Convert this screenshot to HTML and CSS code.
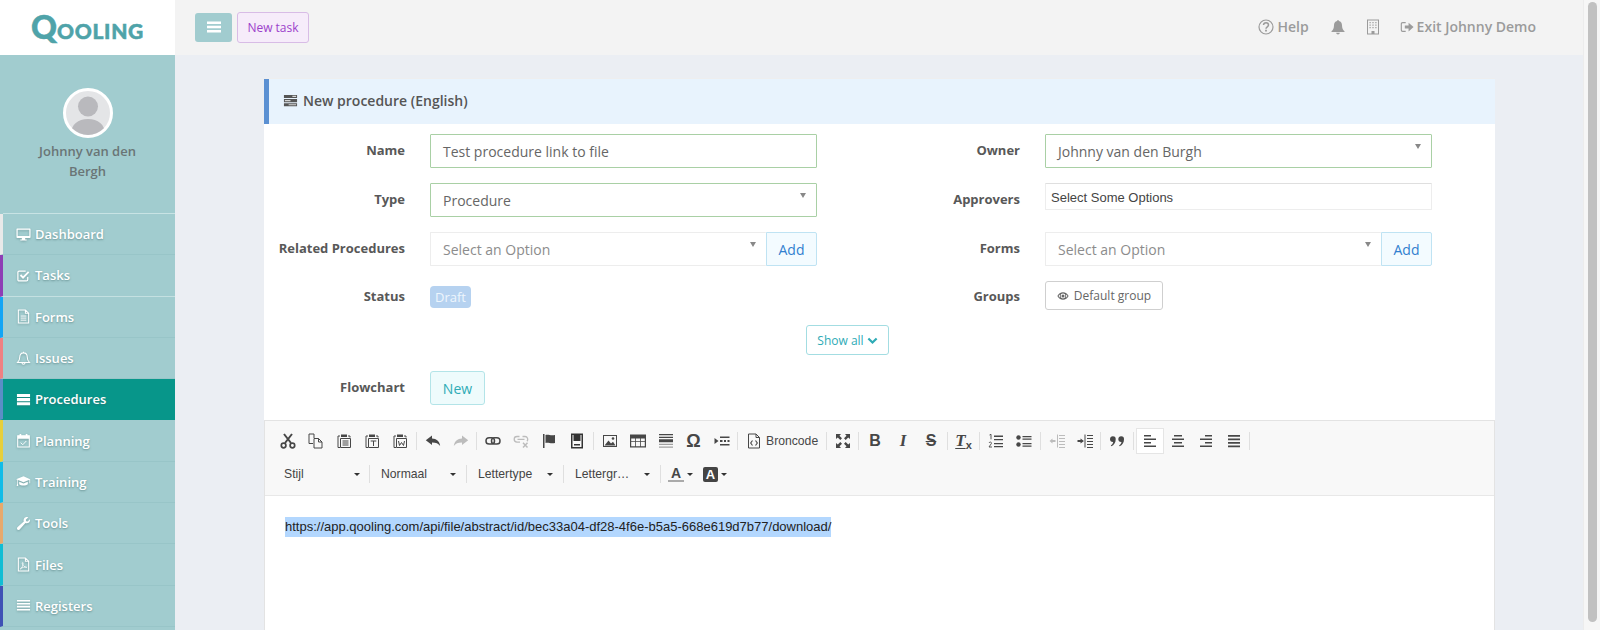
FILE: index.html
```html
<!DOCTYPE html>
<html lang="en">
<head>
<meta charset="utf-8">
<title>Qooling - New procedure</title>
<link rel="stylesheet" href="styles.css">
</head>
<body>
<svg class="sprite" xmlns="http://www.w3.org/2000/svg">
  <symbol id="i-bars" viewBox="0 0 16 16"><path d="M1 2.500h14v2.400H1zM1 6.800h14v2.400H1zM1 11.100h14v2.400H1z"/></symbol>
  <symbol id="i-proc" viewBox="0 0 16 16"><path d="M1 2h14v3.400H1zM1 6.400h14v3.400H1zM1 10.800h14v3.400H1z"/><path fill="#fff" opacity=".75" d="M10 3h4v1.200h-4zM2 7.500h6v1.200H2zM6 11.900h8v1.200H6z"/></symbol>
  <symbol id="i-desktop" viewBox="0 0 16 16"><path fill-rule="evenodd" d="M1.300 1.500h13.400c.5 0 .8.300.8.800v8.600c0 .5-.3.800-.8.800H9.800v1.500h1.600v1.300H4.600v-1.300h1.600v-1.500H1.300c-.5 0-.8-.3-.8-.8V2.300c0-.5.300-.8.800-.8zM1.800 2.800v6.900h12.400V2.800z"/></symbol>
  <symbol id="i-check" viewBox="0 0 16 16"><path fill="none" stroke="currentColor" stroke-width="1.300" d="M12.500 9.500v3c0 .8-.5 1.300-1.300 1.300H3.300c-.8 0-1.300-.5-1.300-1.300V4.600c0-.8.500-1.300 1.300-1.300h7"/><path fill="none" stroke="currentColor" stroke-width="2" d="M4.800 7.500l2.700 2.700 6-6"/></symbol>
  <symbol id="i-file" viewBox="0 0 16 16"><path fill="none" stroke="currentColor" stroke-width="1.100" d="M2.500 1h7.500l3.500 3.500V15h-11zM10 1v3.500h3.500"/><path fill="none" stroke="currentColor" d="M5 7.500h6M5 9.700h6M5 11.900h6"/></symbol>
  <symbol id="i-bell-o" viewBox="0 0 16 16"><path fill="none" stroke="currentColor" stroke-width="1.100" d="M8 2c2.800 0 4 2 4 4.500 0 3 1 4.500 2.300 5.700H1.700C3 11 4 9.500 4 6.500 4 4 5.200 2 8 2zM6.400 12.500c0 2.100 3.200 2.100 3.200 0M8 .8V2"/></symbol>
  <symbol id="i-cal" viewBox="0 0 16 16"><path fill="none" stroke="currentColor" stroke-width="1.100" d="M1.800 3h12.400v12H1.800z"/><path d="M1.800 3h12.400v3H1.800zM3.800 1h1.800v3H3.800zM10.400 1h1.800v3h-1.800z"/><path fill="none" stroke="currentColor" d="M5 10.300l2.200 2.200 3.800-4"/></symbol>
  <symbol id="i-grad" viewBox="0 0 16 16"><path d="M8 2.500L.1 5.600 8 8.700l6.300-2.500v3.600h.8V5.600zM3.400 8.300v2.500c1.400 2 7.800 2 9.200 0V8.300L8 10.100z"/><path d="M1.200 6.200h.7v4.300l.5 2.200H.7l.5-2.200z"/></symbol>
  <symbol id="i-wrench" viewBox="0 0 16 16"><path d="M15 4.200c0 2.500-2.500 4.200-4.900 3.300l-6.200 6.800c-.9.900-2.300.6-2.700-.2-.4-.7-.3-1.500.3-2.100l6.800-6.200C7.400 3.300 9.400.6 12 1c.4 0 .8.200 1.100.3L10.500 3.900l.4 1.600 1.600.4 2.300-2.500c.1.300.2.500.2.800z"/></symbol>
  <symbol id="i-pdf" viewBox="0 0 16 16"><path fill="none" stroke="currentColor" stroke-width="1.100" d="M2.500 1h7.500l3.500 3.500V15h-11zM10 1v3.500h3.500"/><path fill="none" stroke="currentColor" stroke-width=".8" d="M4.500 12.800c2-1 3.500-4.500 3-6.500-.3-1-1.200 0-.6 1.500.7 1.600 2.200 3 4.600 3.200-2-.6-4.700-.1-7 1.800z"/></symbol>
  <symbol id="i-lines" viewBox="0 0 16 16"><path d="M1 2h14v1.700H1zM1 5.200h14v1.700H1zM1 8.400h14v1.700H1zM1 11.600h14v1.700H1z"/></symbol>
  <symbol id="i-help" viewBox="0 0 16 16"><circle cx="8" cy="8" r="7" fill="none" stroke="currentColor" stroke-width="1.200"/><path fill="none" stroke="currentColor" stroke-width="1.500" d="M5.500 6c.2-3 5-3 5 0 0 1.800-2.500 1.800-2.500 3.800"/><path d="M7.100 10.800h1.800v1.800H7.100z"/></symbol>
  <symbol id="i-bell" viewBox="0 0 16 16"><path d="M8 1c.5 0 .9.400.9.900 2.100.4 3.100 2.200 3.100 4.400 0 3.200 1 4.600 2.500 5.900v.8h-13v-.8C3 10.900 4 9.500 4 6.300c0-2.200 1-4 3.100-4.400 0-.5.400-.9.900-.9zM6.200 13.800h3.600c0 2.200-3.600 2.200-3.600 0z"/></symbol>
  <symbol id="i-building" viewBox="0 0 16 16"><path fill-rule="evenodd" d="M2 .5h12v15H2zM3 1.500v13h3.500V12h3v2.500H13v-13z"/><path d="M4.500 3h1.200v1.200H4.500zM7.400 3h1.200v1.200H7.400zM10.300 3h1.200v1.200h-1.200zM4.500 5.500h1.200v1.200H4.500zM7.400 5.500h1.200v1.200H7.400zM10.300 5.500h1.200v1.200h-1.200zM4.500 8h1.200v1.200H4.500zM7.400 8h1.200v1.200H7.400zM10.300 8h1.200v1.200h-1.200z"/></symbol>
  <symbol id="i-exit" viewBox="0 0 16 16"><path fill="none" stroke="currentColor" stroke-width="1.300" d="M6.500 3H3c-1 0-1.500.5-1.500 1.500v7c0 1 .5 1.500 1.500 1.500h3.500"/><path d="M5.500 6.200h4.300V3l5.700 5-5.700 5V9.800H5.500z"/></symbol>
  <symbol id="i-eye" viewBox="0 0 16 16"><path fill-rule="evenodd" d="M8 3c3.300 0 6 2 7.500 5C14 11 11.300 13 8 13S2 11 .5 8C2 5 4.700 3 8 3zM8 4.800a3.200 3.200 0 1 0 0 6.400 3.200 3.200 0 0 0 0-6.400zM2 8c.7 1 1.500 1.900 2.500 2.500-1-1.600-1-3.400 0-5C3.500 6.100 2.700 7 2 8zm9.500-2.500c1 1.600 1 3.400 0 5 1-.6 1.800-1.500 2.500-2.500-.7-1-1.500-1.900-2.500-2.500z"/><circle cx="8" cy="8" r="2"/></symbol>
  <symbol id="i-chev" viewBox="0 0 16 16"><path fill="none" stroke="currentColor" stroke-width="3.200" d="M2 5l6 6 6-6"/></symbol>
  <symbol id="e-cut" viewBox="0 0 16 16"><path fill="none" stroke="currentColor" stroke-width="2" d="M4 1l7 9M12 1l-7 9"/><circle cx="3.600" cy="12.500" r="2.300" fill="none" stroke="currentColor" stroke-width="1.700"/><circle cx="12.400" cy="12.500" r="2.300" fill="none" stroke="currentColor" stroke-width="1.700"/></symbol>
  <symbol id="e-copy" viewBox="0 0 16 16"><path fill="none" stroke="currentColor" d="M6 5V1H1v9.500h4M6 5.500h4.500l3.500 3.500v6H6zM10.500 5.500V9H14"/></symbol>
  <symbol id="e-paste" viewBox="0 0 16 16"><path fill="none" stroke="currentColor" d="M4 3H2v11.500h2M12 3h2v1.500M4.500 5.500h10v9h-10z"/><path d="M5 1.500h6V4H5z"/><path fill="none" stroke="currentColor" d="M6.500 8h6M6.500 10h6M6.500 12h6"/></symbol>
  <symbol id="e-pastet" viewBox="0 0 16 16"><path fill="none" stroke="currentColor" d="M4 3H2v11.500h2M12 3h2v1.500M4.500 5.500h10v9h-10z"/><path d="M5 1.500h6V4H5z"/><path fill="none" stroke="currentColor" d="M6.700 8h5.600M9.500 8v5"/></symbol>
  <symbol id="e-pastew" viewBox="0 0 16 16"><path fill="none" stroke="currentColor" d="M4 3H2v11.500h2M12 3h2v1.500M4.500 5.500h10v9h-10z"/><path d="M5 1.500h6V4H5z"/><path fill="none" stroke="currentColor" d="M6.500 8l1 4.500 2-3 2 3 1-4.500"/></symbol>
  <symbol id="e-undo" viewBox="0 0 16 16"><path d="M.8 7.300L7 2.500v3c4.500.2 7.500 2.700 8.200 7.500-1.800-2.600-4-3.500-8.200-3.600V12z"/></symbol>
  <symbol id="e-redo" viewBox="0 0 16 16"><path d="M15.200 7.300L9 2.500v3C4.500 5.700 1.500 8.200.8 13c1.800-2.600 4-3.500 8.200-3.600V12z"/></symbol>
  <symbol id="e-link" viewBox="0 0 16 16"><rect x="1" y="4.700" width="8.500" height="6.300" rx="3.100" fill="none" stroke="currentColor" stroke-width="1.500"/><rect x="6.500" y="4.700" width="8.500" height="6.300" rx="3.100" fill="none" stroke="currentColor" stroke-width="1.500"/></symbol>
  <symbol id="e-unlink" viewBox="0 0 16 16"><path fill="none" stroke="currentColor" stroke-width="1.300" d="M6.500 3.500H4a2.800 2.800 0 0 0 0 5.600h3M9.500 3.500H12a2.800 2.800 0 0 1 2 4.700M4.500 6.300h7"/><path fill="none" stroke="currentColor" stroke-width="1.500" d="M10 9.800l4.500 4.700M14.500 9.800L10 14.500"/></symbol>
  <symbol id="e-flag" viewBox="0 0 16 16"><path d="M2 1h1.500v14H2zM4.500 2c3-1 5 1.200 9.500 0v8c-4.500 1.200-6.500-1-9.500 0z"/></symbol>
  <symbol id="e-save" viewBox="0 0 16 16"><path fill-rule="evenodd" d="M2 .5h12v15H2zM3.500 2v12h9V2z"/><path d="M4.500 2h7v6h-7zM5 11h6v1.500H5z"/></symbol>
  <symbol id="e-image" viewBox="0 0 16 16"><path fill-rule="evenodd" d="M1 2h14v12H1zM2 3v10h12V3z"/><path d="M2.500 12.500l4-5 2.500 3 2-1.800 2.500 3.800z"/><circle cx="11" cy="5.500" r="1.300"/></symbol>
  <symbol id="e-table" viewBox="0 0 16 16"><path fill-rule="evenodd" d="M0 1.500h16v13H0zM1.200 5.500v2.700h4V5.500zm4.800 0v2.700h4V5.500zm4.800 0v2.700h4V5.500zM1.200 9v4.300h4V9zM6 9v4.300h4V9zm4.800 0v4.300h4V9z"/></symbol>
  <symbol id="e-hr" viewBox="0 0 16 16"><path d="M1 1h14v1.300H1zM1 3.800h14V5H1zM1 6.300h14v3H1z"/><path opacity=".5" d="M1 10.800h14V12H1zM1 13.500h14v1.200H1z"/></symbol>
  <symbol id="e-block" viewBox="0 0 16 16"><path d="M.5 5l4 3-4 3zM6 3.500h9.500V5H6zM6 7h2.500v2H6zM10 7h2v2h-2zM13.500 7h2v2h-2zM6 11h9.500v1.500H6z"/></symbol>
  <symbol id="e-source" viewBox="0 0 16 16"><path fill="none" stroke="currentColor" d="M2.500 1h7.500l3.500 3.500V15h-11zM10 1v3.500h3.500"/><path fill="none" stroke="currentColor" stroke-width="1.100" d="M6.500 7.500L4.700 10l1.800 2.500M9.500 7.500l1.800 2.500-1.800 2.500"/></symbol>
  <symbol id="e-max" viewBox="0 0 16 16"><path d="M1 1h5L4.500 2.800 7 5.300 5.300 7 2.800 4.500 1 6zM15 1v5l-1.800-1.500L10.700 7 9 5.300l2.500-2.500L10 1zM1 15v-5l1.800 1.500L5.300 9 7 10.700l-2.500 2.500L6 15zM15 15h-5l1.500-1.800L9 10.700 10.700 9l2.500 2.500L15 10z"/></symbol>
  <symbol id="e-ol" viewBox="0 0 16 16"><path d="M6 2.500h9V4H6zM6 6h9v1.300H6zM6 10h9v1.300H6zM6 13h9v1.300H6z"/><path fill="none" stroke="currentColor" stroke-width=".9" d="M1.500 2L3 1.300v5M1 10c.5-1.500 3-1 2.400.5L1 14h3"/></symbol>
  <symbol id="e-ul" viewBox="0 0 16 16"><circle cx="2.500" cy="4.500" r="2.200"/><circle cx="2.500" cy="11.500" r="2.200"/><path d="M6.500 3h9v1.300h-9zM6.500 5.500h9v1.300h-9zM6.500 10h9v1.300h-9zM6.500 12.500h9v1.300h-9z"/></symbol>
  <symbol id="e-outdent" viewBox="0 0 16 16"><path d="M8 1.500h1v13H8zM10 2h6v1h-6zM10 5h6v1h-6zM10 8h6v1h-6zM10 11h6v1h-6zM10 14h6v1h-6zM.5 8l3-2.500V7h3v2h-3v1.500z"/></symbol>
  <symbol id="e-indent" viewBox="0 0 16 16"><path d="M7.500 1.500h1v13h-1zM10 2h6v1h-6zM10 5h6v1h-6zM10 8h6v1h-6zM10 11h6v1h-6zM10 14h6v1h-6zM7 8L3.500 5.500V7H.5v2h3v1.500z"/></symbol>
  <symbol id="e-quote" viewBox="0 0 16 16"><path d="M3.800 3.200a3 3 0 0 1 2.900 3.300c0 3-1.700 5.700-4.400 6.800l-.5-.9c1.300-.8 2.200-2 2.400-3.400C2 9.100 1 7.800 1 6.200c0-1.800 1.200-3 2.800-3zM12.100 3.200A3 3 0 0 1 15 6.500c0 3-1.700 5.700-4.400 6.800l-.5-.9c1.300-.8 2.200-2 2.400-3.400-2.200.1-3.200-1.200-3.200-2.800 0-1.800 1.200-3 2.800-3z"/></symbol>
  <symbol id="e-left" viewBox="0 0 16 16"><path d="M2 2h7v1.500H2zM2 5.500h12V7H2zM2 9h7v1.500H2zM2 12.500h12V14H2z"/></symbol>
  <symbol id="e-center" viewBox="0 0 16 16"><path d="M4 2h8v1.500H4zM2 5.500h12V7H2zM4 9h8v1.500H4zM2 12.500h12V14H2z"/></symbol>
  <symbol id="e-right" viewBox="0 0 16 16"><path d="M7 2h7v1.500H7zM2 5.500h12V7H2zM7 9h7v1.500H7zM2 12.500h12V14H2z"/></symbol>
  <symbol id="e-just" viewBox="0 0 16 16"><path d="M2 2h12v1.800H2zM2 5.500h12v1.800H2zM2 9h12v1.800H2zM2 12.500h12v1.800H2z"/></symbol>
</svg>

<div class="page">
  <div class="app">
    <div class="logo"><span class="logo-q">Q</span><span class="logo-rest">OOLING</span></div>

    <header class="topbar">
      <button class="menu-btn" type="button"><svg class="ic-16"><use href="#i-bars"/></svg></button>
      <button class="task-btn" type="button">New task</button>
      <nav class="top-links">
        <a class="top-link top-help"><svg class="ic-16"><use href="#i-help"/></svg>Help</a>
        <a class="top-link top-bell"><svg class="ic-16"><use href="#i-bell"/></svg></a>
        <a class="top-link"><svg class="ic-16"><use href="#i-building"/></svg></a>
        <a class="top-link top-exit"><svg class="ic-14"><use href="#i-exit"/></svg>Exit Johnny Demo</a>
      </nav>
    </header>

    <aside class="sidebar">
      <div class="profile">
        <div class="avatar">
          <svg viewBox="0 0 44 44"><circle cx="22" cy="15.500" r="10" fill="#b9b9bd"/><path d="M5 44c0-11 7-16 17-16s17 5 17 16z" fill="#b9b9bd"/></svg>
        </div>
        <div class="profile-name">Johnny van den Bergh</div>
      </div>
      <ul class="menu">
        <li class="menu-item c-dash"><svg class="ic-15"><use href="#i-desktop"/></svg>Dashboard</li>
        <li class="menu-item c-tasks"><svg class="ic-15"><use href="#i-check"/></svg>Tasks</li>
        <li class="menu-item c-forms"><svg class="ic-15"><use href="#i-file"/></svg>Forms</li>
        <li class="menu-item c-issues"><svg class="ic-15"><use href="#i-bell-o"/></svg>Issues</li>
        <li class="menu-item c-proc active"><svg class="ic-15"><use href="#i-proc"/></svg>Procedures</li>
        <li class="menu-item c-plan"><svg class="ic-15"><use href="#i-cal"/></svg>Planning</li>
        <li class="menu-item c-train"><svg class="ic-15"><use href="#i-grad"/></svg>Training</li>
        <li class="menu-item c-tools"><svg class="ic-15"><use href="#i-wrench"/></svg>Tools</li>
        <li class="menu-item c-files"><svg class="ic-15"><use href="#i-pdf"/></svg>Files</li>
        <li class="menu-item c-reg"><svg class="ic-15"><use href="#i-lines"/></svg>Registers</li>
      </ul>
    </aside>

    <main class="main">
      <section class="card">
        <h1 class="card-head"><svg class="ic-15"><use href="#i-proc"/></svg>New procedure (English)</h1>
        <div class="form-grid">
          <label class="lbl">Name</label>
          <div class="field ok">Test procedure link to file</div>
          <label class="lbl">Owner</label>
          <div class="field ok select">Johnny van den Burgh</div>

          <label class="lbl">Type</label>
          <div class="field ok select">Procedure</div>
          <label class="lbl">Approvers</label>
          <div class="field multi">Select Some Options</div>

          <label class="lbl">Related Procedures</label>
          <div class="group">
            <div class="field select placeholder">Select an Option</div>
            <button class="add-btn" type="button">Add</button>
          </div>
          <label class="lbl">Forms</label>
          <div class="group">
            <div class="field select placeholder">Select an Option</div>
            <button class="add-btn" type="button">Add</button>
          </div>

          <label class="lbl">Status</label>
          <div class="status-cell"><span class="badge">Draft</span></div>
          <label class="lbl">Groups</label>
          <div class="groups-cell"><button class="group-btn" type="button"><svg class="ic-12"><use href="#i-eye"/></svg>Default group</button></div>
        </div>

        <div class="show-row"><button class="show-btn" type="button">Show all<svg class="ic-11"><use href="#i-chev"/></svg></button></div>

        <div class="flow-row">
          <label class="lbl">Flowchart</label>
          <button class="new-btn" type="button">New</button>
        </div>

        <div class="editor">
          <div class="toolbar">
            <div class="tool-row">
              <span class="tb"><svg class="ic-16"><use href="#e-cut"/></svg></span>
              <span class="tb"><svg class="ic-16"><use href="#e-copy"/></svg></span>
              <span class="tb"><svg class="ic-16"><use href="#e-paste"/></svg></span>
              <span class="tb"><svg class="ic-16"><use href="#e-pastet"/></svg></span>
              <span class="tb"><svg class="ic-16"><use href="#e-pastew"/></svg></span>
              <i class="sep"></i>
              <span class="tb"><svg class="ic-16"><use href="#e-undo"/></svg></span>
              <span class="tb off"><svg class="ic-16"><use href="#e-redo"/></svg></span>
              <i class="sep"></i>
              <span class="tb"><svg class="ic-16"><use href="#e-link"/></svg></span>
              <span class="tb off"><svg class="ic-16"><use href="#e-unlink"/></svg></span>
              <span class="tb"><svg class="ic-16"><use href="#e-flag"/></svg></span>
              <span class="tb dark"><svg class="ic-16"><use href="#e-save"/></svg></span>
              <i class="sep"></i>
              <span class="tb"><svg class="ic-16"><use href="#e-image"/></svg></span>
              <span class="tb"><svg class="ic-16"><use href="#e-table"/></svg></span>
              <span class="tb"><svg class="ic-16"><use href="#e-hr"/></svg></span>
              <span class="tb omega">Ω</span>
              <span class="tb"><svg class="ic-16"><use href="#e-block"/></svg></span>
              <i class="sep"></i>
              <span class="tb tb-source"><svg class="ic-16"><use href="#e-source"/></svg>Broncode</span>
              <i class="sep"></i>
              <span class="tb"><svg class="ic-16"><use href="#e-max"/></svg></span>
              <i class="sep"></i>
              <span class="tb glyph bold">B</span>
              <span class="tb glyph italic">I</span>
              <span class="tb glyph strike">S</span>
              <i class="sep"></i>
              <span class="tb glyph italic clear"><u>T</u><small>x</small></span>
              <i class="sep"></i>
              <span class="tb"><svg class="ic-16"><use href="#e-ol"/></svg></span>
              <span class="tb"><svg class="ic-16"><use href="#e-ul"/></svg></span>
              <i class="sep"></i>
              <span class="tb off"><svg class="ic-16"><use href="#e-outdent"/></svg></span>
              <span class="tb"><svg class="ic-16"><use href="#e-indent"/></svg></span>
              <i class="sep"></i>
              <span class="tb"><svg class="ic-16"><use href="#e-quote"/></svg></span>
              <i class="sep"></i>
              <span class="tb on"><svg class="ic-16"><use href="#e-left"/></svg></span>
              <span class="tb"><svg class="ic-16"><use href="#e-center"/></svg></span>
              <span class="tb"><svg class="ic-16"><use href="#e-right"/></svg></span>
              <span class="tb"><svg class="ic-16"><use href="#e-just"/></svg></span>
              <i class="sep"></i>
            </div>
            <div class="tool-row tool-row-2">
              <span class="combo c-w1">Stijl<b class="caret"></b></span>
              <i class="sep"></i>
              <span class="combo c-w2">Normaal<b class="caret"></b></span>
              <i class="sep"></i>
              <span class="combo c-w2">Lettertype<b class="caret"></b></span>
              <i class="sep"></i>
              <span class="combo c-w2">Lettergr…<b class="caret"></b></span>
              <i class="sep"></i>
              <span class="color-btn"><span class="color-a">A</span><b class="caret"></b></span>
              <span class="color-btn"><span class="color-bg">A</span><b class="caret"></b></span>
            </div>
          </div>
          <div class="editor-body"><span class="selected">https://app.qooling.com/api/file/abstract/id/bec33a04-df28-4f6e-b5a5-668e619d7b77/download/</span></div>
        </div>
      </section>
    </main>
  </div>
  <div class="rail"><div class="thumb"></div></div>
</div>
</body>
</html>
```
FILE: styles.css
```css
* { box-sizing: border-box; }
html, body { margin: 0; height: 100%; overflow: hidden; }
body { font-family: "Open Sans", sans-serif; font-size: 14px; color: #555; background: #ebeef3; }
button { font-family: inherit; cursor: pointer; }
ul { list-style: none; margin: 0; padding: 0; }
svg { fill: currentColor; flex: none; }
.sprite { position: absolute; width: 0; height: 0; }
.ic-16 { width: 16px; height: 16px; }
.ic-15 { width: 15px; height: 15px; }
.ic-14 { width: 14px; height: 14px; }
.ic-12 { width: 12px; height: 12px; }
.ic-11 { width: 11px; height: 11px; }

.page { display: flex; height: 630px; }
.app { width: 1583px; display: grid; grid-template-columns: 175px 1fr; grid-template-rows: 55px 1fr; }
.rail { width: 17px; background: #f6f6f6; border-left: 1px solid #ececec; padding: 2px 3px 0 4px; }
.thumb { height: 620px; background: #c1c1c1; border-radius: 5px; }

.logo { background: #fff; display: flex; align-items: center; justify-content: center; color: #4fa3a9; font-family: "Lato", sans-serif; font-weight: 900; padding: 0 0 2px 0; -webkit-text-stroke: .5px #4fa3a9; }
.logo-q { font-size: 32px; line-height: 1; }
.logo-rest { font-size: 21px; line-height: 1; margin-top: 7px; letter-spacing: .7px; }

.topbar { background: #f3f3f3; display: flex; align-items: center; padding-left: 20px; }
.menu-btn { width: 37px; height: 29px; margin-top: -1px; background: #a1cccf; border: 0; border-radius: 3px; color: #fff; padding: 0; display: flex; align-items: center; justify-content: center; }
.task-btn { width: 72px; height: 31px; margin-left: 5px; margin-top: -1px; padding: 0; background: #f6ecfa; border: 1px solid #d8bce6; border-radius: 3px; color: #9c3fcb; font-size: 12px; }
.top-links { margin-left: auto; margin-right: 47px; display: flex; align-items: center; color: #9b9b9b; font-size: 14px; font-weight: 600; margin-top: -2px; }
.top-link { display: flex; align-items: center; }
.top-help svg { margin-right: 3px; }
.top-link + .top-link { margin-left: 19px; }
.top-link.top-bell { margin-left: 21px; }
.top-exit svg { margin-right: 3px; }

.sidebar { background: #a1cccf; overflow: hidden; }
.profile { height: 159px; padding-top: 33px; display: flex; flex-direction: column; align-items: center; border-bottom: 1px solid #c8e3e4; margin-left: 3px; }
.avatar { width: 50px; height: 50px; border-radius: 50%; border: 3px solid #fff; background: #e4e5e7; overflow: hidden; margin-left: -3px; }
.avatar svg { display: block; width: 44px; height: 44px; }
.profile-name { width: 120px; margin: 4px 0 0 -3px; text-align: center; color: #6a7576; font-weight: 600; font-size: 13px; line-height: 19.500px; }

.menu-item { height: 41.300px; display: flex; align-items: center; padding-left: 13px; border-left: 3px solid; border-bottom: 1px solid #98c5c8; color: #fff; font-weight: 600; font-size: 13px; text-shadow: 0 1px 2px rgba(60, 100, 100, .55); }
.menu-item svg { margin-right: 4px; filter: drop-shadow(0 1px 1px rgba(60, 100, 100, .4)); }
.c-dash { border-left-color: #e9e9e9; }
.c-tasks { border-left-color: #8e3db5; border-bottom-color: #c4e0e1; }
.c-forms { border-left-color: #12a5f5; }
.c-issues { border-left-color: #f08082; }
.c-proc { border-left-color: #5b8ec6; }
.c-plan { border-left-color: #e6cf3c; }
.c-train { border-left-color: #10bce8; }
.c-tools { border-left-color: #e8a96c; }
.c-files { border-left-color: #10bdd4; }
.c-reg { border-left-color: #3f51b5; }
.menu-item.active { background: #07968a; border-bottom-color: #07968a; }

.main { padding: 23px 88px 0 89px; overflow: hidden; }
.card { background: #fff; height: 600px; border-top: 1px solid #eeeeee; }
.card-head { margin: 0; height: 45px; padding: 0 0 2px 14px; background: #e8f3fd; border-left: 5px solid #5b90d2; display: flex; align-items: center; font-size: 14px; font-weight: 600; color: #555; }
.card-head svg { margin-right: 5px; color: #555; }

.form-grid { display: grid; grid-template-columns: 141px 387px 178px 387px; grid-template-rows: 34px 34px 34px 32px; column-gap: 25px; row-gap: 15px; padding-top: 10px; align-items: center; }
.lbl { text-align: right; font-weight: 700; font-size: 13px; color: #585858; padding-bottom: 2px; }
.field { position: relative; height: 34px; padding: 0 12px; border: 1px solid #ededed; border-radius: 1px; display: flex; align-items: center; font-size: 14px; color: #666; background: #fff; }
.field.ok { border-color: #a9d0a5; }
.select::after { content: ""; position: absolute; top: 9px; right: 10px; border-left: 3px solid transparent; border-right: 3px solid transparent; border-top: 5px solid #888; }
.placeholder { color: #8c8c8c; }
.multi { height: 27px; align-self: start; padding: 1px 5px 0; font-family: "Liberation Sans", sans-serif; font-size: 13px; color: #444; border-top-color: #dfdfdf; }
.group { display: flex; }
.group .field { flex: 1; border-right: 0; }
.add-btn { width: 51px; height: 34px; padding: 0; background: #f3fbff; border: 1px solid #bfe3f3; border-radius: 0 2px 2px 0; color: #3180cf; font-size: 14px; }
.status-cell { display: flex; }
.badge { height: 22px; width: 41px; background: #b6d2f0; color: #eef6fd; border-radius: 4px; font-size: 13px; display: flex; align-items: center; justify-content: center; }
.groups-cell { align-self: start; display: flex; }
.group-btn { width: 118px; height: 29px; padding: 0; background: #fff; border: 1px solid #cfcfcf; border-radius: 3px; color: #666; font-size: 12px; display: flex; align-items: center; justify-content: center; }
.group-btn svg { margin-right: 5px; }
.show-row { margin-top: 12px; padding-left: 542px; display: flex; }
.show-btn { width: 83px; height: 30px; padding: 0; background: #fff; border: 1px solid #a3dde2; border-radius: 3px; color: #2eabb6; font-size: 12px; display: flex; align-items: center; justify-content: center; }
.show-btn svg { margin-left: 3px; }
.flow-row { margin-top: 16px; display: grid; grid-template-columns: 141px auto; column-gap: 25px; justify-content: start; align-items: center; }
.new-btn { width: 55px; height: 34px; padding: 0; background: #eefbfc; border: 1px solid #b3e4e8; border-radius: 3px; color: #2eabb6; font-size: 14px; }

.editor { margin-top: 15px; border: 1px solid #e3e3e3; border-width: 1px 1px 0; height: 210px; }
.toolbar { height: 75px; background: #f8f8f8; border-bottom: 1px solid #e8e8e8; padding: 7px 0 0 9px; }
.tool-row { display: flex; align-items: center; height: 26px; color: #474747; }
.tool-row-2 { margin-top: 7px; }
.tb { width: 28px; height: 26px; flex: none; display: flex; align-items: center; justify-content: center; }
.tb.off { color: #bcbcbc; }
.tb.dark { color: #333; }
.tb.on { background: #fff; border: 1px solid #e5e5e5; }
.sep { width: 1px; height: 18px; background: #dfdfdf; margin: 0 2px 0 1.500px; flex: none; }
.omega { font-family: "Liberation Sans", sans-serif; font-size: 18px; font-weight: 700; }
.tb-source { width: 84px; justify-content: flex-start; padding-left: 6px; font-family: "Liberation Sans", sans-serif; font-size: 12.200px; }
.tb-source svg { margin-right: 4px; }
.glyph { font-family: "Liberation Sans", sans-serif; font-size: 16px; font-weight: 700; }
.italic { font-style: italic; font-family: "Liberation Serif", serif; font-size: 17px; }
.strike { text-decoration: line-through; }
.clear u { text-underline-offset: 2px; }
.clear small { font-size: 11px; font-family: "Liberation Sans", sans-serif; font-style: normal; margin-top: 7px; }

.combo { display: flex; align-items: center; justify-content: space-between; height: 26px; padding-left: 10px; font-family: "Liberation Sans", sans-serif; font-size: 12.200px; color: #444; flex: none; }
.c-w1 { width: 93.500px; padding-right: 8px; }
.c-w2 { width: 92.500px; padding-right: 9px; padding-left: 9px; }
.caret { width: 0; height: 0; border-left: 3px solid transparent; border-right: 3px solid transparent; border-top: 3px solid #333; flex: none; }
.color-btn { display: flex; align-items: center; margin-left: 5px; font-family: "Liberation Sans", sans-serif; font-weight: 700; font-size: 14px; color: #474747; width: 28px; }
.color-btn + .color-btn { margin-left: 7px; }
.color-btn .caret { margin-left: 3px; }
.color-a { display: block; width: 16px; text-align: center; line-height: 14px; border-bottom: 2px solid #aaa; }
.color-bg { display: block; width: 15px; height: 15px; background: #444; color: #fff; border-radius: 2px; text-align: center; line-height: 15px; font-size: 13px; }

.editor-body { padding: 21px 0 0 20px; font-family: "Liberation Sans", sans-serif; font-size: 13px; line-height: 20px; color: #222; }
.selected { display: inline-block; background: #b3d7fe; }
```
